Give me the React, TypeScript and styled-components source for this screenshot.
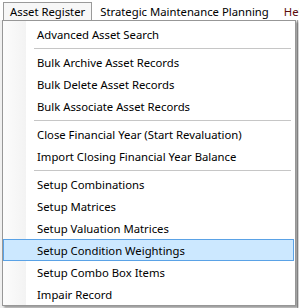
import React from "react";
import styled, { createGlobalStyle } from "styled-components";

const GlobalStyle = createGlobalStyle`
  html, body {
    margin: 0;
    padding: 0;
    background: #f0f0f0;
  }
  * {
    box-sizing: border-box;
  }
`;

type Entry = { label: string; active?: boolean } | "sep";

const entries: Entry[] = [
  { label: "Advanced Asset Search" },
  "sep",
  { label: "Bulk Archive Asset Records" },
  { label: "Bulk Delete Asset Records" },
  { label: "Bulk Associate Asset Records" },
  "sep",
  { label: "Close Financial Year (Start Revaluation)" },
  { label: "Import Closing Financial Year Balance" },
  "sep",
  { label: "Setup Combinations" },
  { label: "Setup Matrices" },
  { label: "Setup Valuation Matrices" },
  { label: "Setup Condition Weightings", active: true },
  { label: "Setup Combo Box Items" },
  { label: "Impair Record" },
];

const App = () => {
  return (
    <>
      <GlobalStyle />
      <Screen>
        <MenuBar>
          <BarItem open>Asset Register</BarItem>
          <BarItem>Strategic Maintenance Planning</BarItem>
          <BarItem tone="#5c0c0c">Help</BarItem>
        </MenuBar>
        <Workspace>
          <EdgeLine />
        </Workspace>
        <Dropdown>
          {entries.map((entry, i) =>
            entry === "sep" ? (
              <Separator key={i} />
            ) : (
              <MenuItem key={i} active={entry.active}>
                {entry.label}
              </MenuItem>
            )
          )}
        </Dropdown>
      </Screen>
    </>
  );
};

const Screen = styled.div`
  position: relative;
  width: 299px;
  height: 308px;
  overflow: hidden;
  display: flex;
  flex-direction: column;
  font-family: "Segoe UI", "Noto Sans", sans-serif;
  font-size: 11.3px;
  color: #000;
`;

const MenuBar = styled.nav`
  height: 20px;
  padding: 2px 0 0 3px;
  display: flex;
  align-items: stretch;
  background: #ffffff;
  white-space: nowrap;
`;

const BarItem = styled.div<{ open?: boolean; tone?: string }>`
  padding: 0 6px 0 6px;
  display: flex;
  align-items: center;
  color: ${(p) => p.tone || "#000"};
  border: 1px solid ${(p) => (p.open ? "#9a9a9a" : "transparent")};
  border-bottom: none;
  background: ${(p) => (p.open ? "#f7f7f7" : "transparent")};
  & + & {
    margin-left: 1px;
  }
`;

const Workspace = styled.div`
  flex: 1;
  display: flex;
  justify-content: flex-end;
  background: #f0f0f0;
`;

const EdgeLine = styled.div`
  width: 1px;
  margin-right: 1px;
  background: #a8a8a8;
`;

/* the open dropdown floats over the workspace */
const Dropdown = styled.div`
  position: absolute;
  left: 2px;
  top: 20px;
  width: 294px;
  padding: 2px 1px 0 0;
  border: 1px solid #979797;
  background: linear-gradient(
    to right,
    #fcfcfc 0,
    #f3f3f3 23px,
    #ffffff 23px
  );
  box-shadow: 2px 2px 2px rgba(0, 0, 0, 0.35);
`;

const MenuItem = styled.div<{ active?: boolean }>`
  height: 22px;
  padding-left: 33px;
  display: flex;
  align-items: center;
  white-space: nowrap;
  border: 1px solid ${(p) => (p.active ? "#5aa2e6" : "transparent")};
  background: ${(p) => (p.active ? "#cce8ff" : "transparent")};
`;

const Separator = styled.div`
  height: 6px;
  display: flex;
  align-items: center;
  padding: 0 3px 0 31px;

  &::before {
    content: "";
    flex: 1;
    height: 1px;
    background: #c6c6c6;
  }
`;

export default App;
